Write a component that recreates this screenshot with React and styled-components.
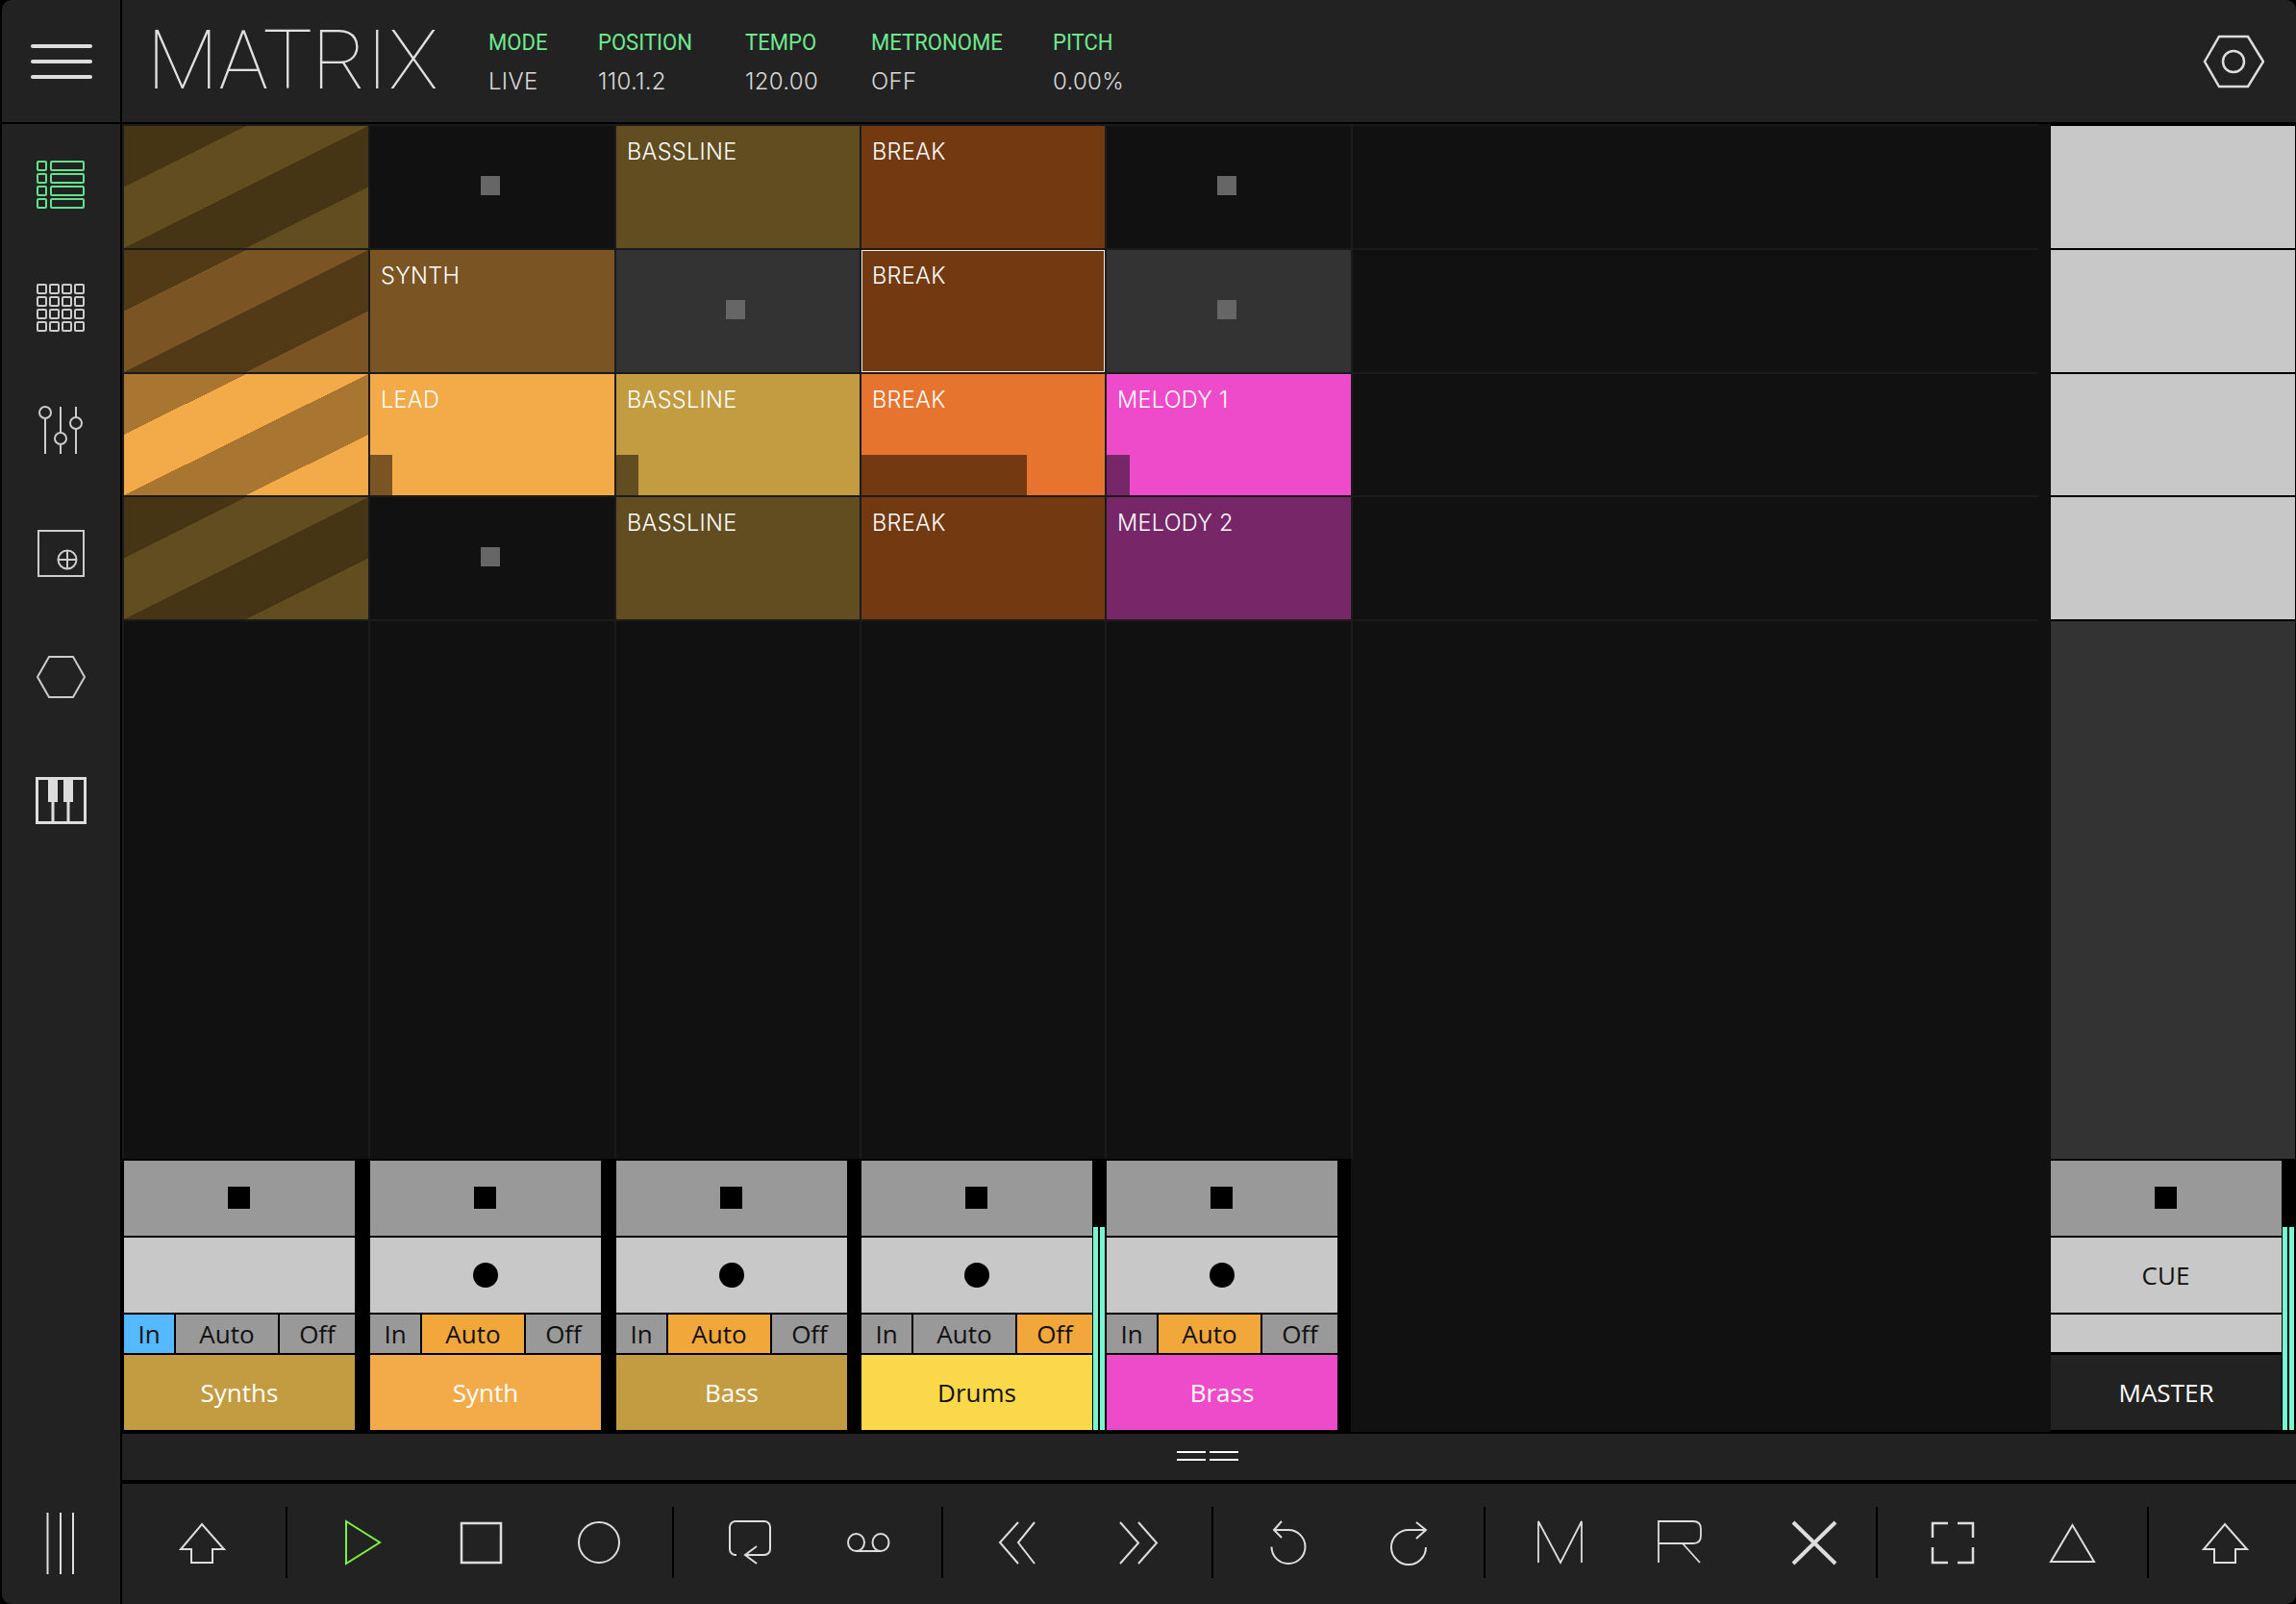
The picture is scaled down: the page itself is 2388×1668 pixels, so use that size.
import React from "react";
import styled, { createGlobalStyle } from "styled-components";

const Global = createGlobalStyle`
  html, body {
    height: 1668px;
    margin: 0;
    padding: 0;
    overflow: hidden;
    background: #000;
  }
  * {
    box-sizing: border-box;
  }
`;

const Window = styled.div`
  display: grid;
  grid-template-columns: 123px 1fr;
  column-gap: 2px;
  width: 2386px;
  height: 1668px;
  margin-left: 2px;
  border-radius: 10px;
  overflow: hidden;
  background: #000;
`;

const Side = styled.aside`
  display: flex;
  flex-direction: column;
  background: #222;
`;
const MenuCell = styled.div`
  display: flex;
  flex-direction: column;
  gap: 12px;
  height: 129px;
  padding: 46px 0 0 30px;
  border-bottom: 2px solid #000;
`;
const MenuBar = styled.span`
  width: 64px;
  height: 4px;
  border-radius: 2px;
  background: #ddd;
`;
const NavButton = styled.div`
  height: 128px;
  padding: 32px 0 0 30px;
`;
const SideFoot = styled.div`
  margin-top: auto;
  padding: 0 0 31px 30px;
`;

const Main = styled.main`
  display: flex;
  flex-direction: column;
  min-width: 0;
`;
const Header = styled.header`
  display: flex;
  height: 127px;
  margin-bottom: 2px;
  padding: 0 33px 0 26px;
  background: #222;
`;
const Logo = styled.div`
  width: 355px;
  padding-top: 13px;
  font-family: "Roboto", sans-serif;
  font-weight: 100;
  font-size: 86px;
  line-height: 100px;
  color: #e0e0e0;
`;
const Readouts = styled.div`
  display: grid;
  grid-template-columns: 114px 153px 131px 189px auto;
  grid-auto-flow: column;
  grid-template-rows: 28px 28px;
  row-gap: 13px;
  padding-top: 30px;
`;
const ReadLabel = styled.div`
  font-family: "Roboto", sans-serif;
  font-size: 24px;
  line-height: 28px;
  color: #6fe88f;
  transform: scaleX(0.92);
  transform-origin: left;
`;
const ReadValue = styled.div`
  font-family: "Inter", sans-serif;
  font-weight: 300;
  font-size: 24px;
  line-height: 28px;
  letter-spacing: 0.3px;
  color: #d8d8d8;
`;
const Settings = styled.div`
  margin-left: auto;
  padding-top: 32px;
`;

const Content = styled.section`
  display: flex;
  height: 1360px;
  margin-bottom: 2px;
  background: #111;
`;
const TrackArea = styled.div`
  display: flex;
  flex-direction: column;
  width: 2006px;
`;
const Matrix = styled.div`
  display: grid;
  grid-template-columns: 254px 254px 253px 253px 254px 713px;
  grid-template-rows: 127px 127px 126px 127px 1fr;
  gap: 2px;
  width: 1993px;
  height: 1076px;
  padding: 2px 0 0 2px;
  background: #1b1b1b;
`;
const Slot = styled.div`
  display: flex;
  align-items: center;
  justify-content: center;
  padding: 0 5px 4px 0;
  background: ${(p) => p.$bg || "#111"};
`;
const StopMark = styled.span`
  width: 20px;
  height: 20px;
  background: #666;
`;
const Scene = styled.div`
  background: linear-gradient(
    to bottom right,
    ${(p) => p.$dark} 25%,
    ${(p) => p.$light} 25% 50%,
    ${(p) => p.$dark} 50% 75%,
    ${(p) => p.$light} 75%
  );
`;
const Clip = styled.div`
  display: flex;
  flex-direction: column;
  background: ${(p) => p.$bg};
  outline: ${(p) => (p.$selected ? "1px solid #eee" : "none")};
  outline-offset: -1px;
`;
const ClipName = styled.div`
  padding: 13px 0 0 11px;
  font-family: "Inter", sans-serif;
  font-weight: 350;
  font-size: 23.5px;
  line-height: 28px;
  letter-spacing: 0.3px;
  color: #fff;
`;
const ClipProgress = styled.div`
  width: ${(p) => p.$w}px;
  height: 42px;
  margin-top: auto;
  background: ${(p) => p.$bg};
`;

const StripRow = styled.div`
  display: flex;
  height: 284px;
`;
const StripEdge = styled.div`
  width: 2px;
  background: #000;
`;
const Strip = styled.div`
  display: flex;
  width: ${(p) => p.$w}px;
  padding: 2px 0;
  background: #000;
`;
const Stack = styled.div`
  display: grid;
  grid-template-rows: 78px 78px 40px 78px;
  row-gap: 2px;
  flex: 0 0 240px;
`;
const StopButton = styled.div`
  display: flex;
  align-items: center;
  justify-content: center;
  padding: 0 1px 1px 0;
  background: #999;
`;
const StopSquare = styled.span`
  width: 23px;
  height: 23px;
  background: #000;
`;
const RecButton = styled.div`
  display: flex;
  align-items: center;
  justify-content: center;
  padding-right: 1px;
  font-family: "Open Sans", sans-serif;
  font-size: 26px;
  color: #111;
  background: #c8c8c8;
`;
const RecDot = styled.span`
  width: 26px;
  height: 26px;
  border-radius: 50%;
  background: #000;
`;
const Monitor = styled.div`
  display: grid;
  grid-template-columns: 52px 106px 78px;
  column-gap: 2px;
`;
const MonitorOption = styled.div`
  display: flex;
  align-items: center;
  justify-content: center;
  font-family: "Open Sans", sans-serif;
  font-size: 26px;
  color: #111;
  background: ${(p) => p.$on || "#999"};
`;
const TrackName = styled.div`
  display: flex;
  align-items: center;
  justify-content: center;
  font-family: "Open Sans", sans-serif;
  font-size: 26px;
  color: ${(p) => p.$ink || "#fff"};
  background: ${(p) => p.$bg};
`;
const Meter = styled.div`
  display: flex;
  gap: 2px;
  padding: 69px 0 0 1px;
`;
const MeterBar = styled.span`
  width: 5px;
  background: #78f7d3;
`;

const MasterCol = styled.div`
  display: flex;
  flex-direction: column;
  width: 255px;
  background: #000;
`;
const MasterClips = styled.div`
  display: grid;
  grid-template-rows: 127px 127px 126px 127px;
  row-gap: 2px;
  padding: 2px 1px 2px 0;
`;
const MasterClip = styled.div`
  background: #c8c8c8;
`;
const MasterFill = styled.div`
  flex: 1;
  margin-right: 1px;
  background: #333;
`;
const MasterBlank = styled.div`
  margin-bottom: 1px;
  background: #c8c8c8;
`;

const Divider = styled.div`
  display: flex;
  justify-content: center;
  height: 48px;
  margin-bottom: 4px;
  padding-top: 18px;
  background: #222;
`;
const Grip = styled.div`
  display: flex;
  gap: 4px;
  margin-left: -4px;
`;
const GripBar = styled.span`
  width: 30px;
  height: 10px;
  border-top: 2px solid #fff;
  border-bottom: 2px solid #fff;
`;

const Toolbar = styled.div`
  display: flex;
  align-items: center;
  flex: 1;
  padding-bottom: 3px;
  background: #222;
`;
const ToolButton = styled.div`
  display: flex;
  margin-left: ${(p) => p.$ml}px;
`;
const ToolRule = styled.span`
  width: 2px;
  height: 74px;
  margin-left: ${(p) => p.$ml}px;
  background: #000;
`;
const Glyph = styled.svg`
  display: block;
  width: 64px;
  height: 64px;
  fill: none;
  stroke: ${(p) => p.$ink || "#ddd"};
  stroke-width: ${(p) => p.$sw || 2};
`;

const NAV = [
  <Glyph viewBox="0 0 64 64" $ink="#62e38b" key="clips">
    {[7, 20, 33, 46].map((y) => (
      <g key={y}>
        <rect x="7" y={y} width="9" height="9" rx="1" />
        <rect x="21" y={y} width="34" height="9" rx="1" />
      </g>
    ))}
  </Glyph>,
  <Glyph viewBox="0 0 64 64" $ink="#ccc" key="pads">
    {[7, 20, 33, 46].map((y) =>
      [7, 20, 33, 46].map((x) => (
        <rect key={`${x}-${y}`} x={x} y={y} width="9" height="9" rx="1" />
      ))
    )}
  </Glyph>,
  <Glyph viewBox="0 0 64 64" $ink="#ccc" key="mixer">
    <path d="M15 18V55M31 6V33M31 45V55M47 6V17M47 29V55" />
    <circle cx="15" cy="12" r="6" />
    <circle cx="31" cy="39" r="6" />
    <circle cx="47" cy="23" r="6" />
  </Glyph>,
  <Glyph viewBox="0 0 64 64" $ink="#ccc" key="device">
    <rect x="8" y="7" width="47" height="47" />
    <circle cx="38" cy="37" r="9.5" />
    <path d="M38 27.5V46.5M28.5 37H47.5" />
  </Glyph>,
  <Glyph viewBox="0 0 64 64" $ink="#ccc" key="hex">
    <path d="M7 31L19 10H44L56 31L44 52H19Z" />
  </Glyph>,
  <Glyph viewBox="0 0 64 64" $ink="#ddd" $sw={3} key="piano">
    <rect x="6.5" y="8.5" width="50" height="46" />
    <path d="M23 33V55M39 33V55" />
    <path d="M18 8H28V33H18ZM34 8H44V33H34Z" fill="#ddd" stroke="none" />
  </Glyph>,
];

const UpArrow = () => <path d="M32 13L55 39H43V53H21V39H10Z" />;

const TOOLS = [
  { ml: 51, icon: <UpArrow /> },
  { ml: 55 },
  { ml: 46, ink: "#7df33e", icon: <path d="M15 10L50 32L15 54Z" /> },
  { ml: 59, sw: 2.5, icon: <rect x="12" y="12" width="41" height="41" /> },
  { ml: 59, icon: <circle cx="32" cy="32" r="21" /> },
  { ml: 44 },
  {
    ml: 47,
    icon: (
      <path d="M18 45H17A6 6 0 0 1 11 39V16A6 6 0 0 1 17 10H47A6 6 0 0 1 53 16V39A6 6 0 0 1 47 45H27M39 36L27 45L39 54" />
    ),
  },
  {
    ml: 59,
    icon: (
      <>
        <ellipse cx="19.5" cy="32" rx="8.5" ry="9" />
        <ellipse cx="45" cy="32" rx="8.5" ry="9" />
        <path d="M19.5 41H45" />
      </>
    ),
  },
  { ml: 44 },
  { ml: 45, icon: <path d="M33 11L14 32L33 54M50 11L33 32L50 54" /> },
  { ml: 62, icon: <path d="M13 11L32 32.5L13 54M32 11L51 32.5L32 54" /> },
  { ml: 44 },
  {
    ml: 46,
    icon: <path d="M25 10L17 19L25 27M17 19H32A17.5 17.5 0 1 1 14.5 36.5" />,
  },
  {
    ml: 61,
    icon: <path d="M40 11L50 19L40 28M50 19H32A18 18 0 1 0 50 37" />,
  },
  { ml: 46 },
  { ml: 45, sw: 1.8, icon: <path d="M10 53V10L33 53L55 10V53" /> },
  {
    ml: 61,
    sw: 1.8,
    icon: <path d="M10 53V10H46Q54 10 54 18V25Q54 33 46 33H10M35 33L53 53" />,
  },
  { ml: 76, sw: 4, icon: <path d="M10 11L54 54M54 11L10 54" /> },
  { ml: 32 },
  {
    ml: 46,
    sw: 2.5,
    icon: <path d="M11 27V12H27M37 12H53V27M11 37V53H27M37 53H53V37" />,
  },
  { ml: 60, icon: <path d="M32.5 14L55 52H10Z" /> },
  { ml: 46 },
  { ml: 47, icon: <UpArrow /> },
];

const READOUTS = [
  ["MODE", "LIVE"],
  ["POSITION", "110.1.2"],
  ["TEMPO", "120.00"],
  ["METRONOME", "OFF"],
  ["PITCH", "0.00%"],
];

const GOLD = "#c39b41";
const GOLD_DIM = "#614d1f";
const ORANGE = "#f3aa48";
const ORANGE_DIM = "#7a5523";
const BREAK = "#e6742e";
const BREAK_DIM = "#733a12";
const PINK = "#ee4bcb";
const PINK_DIM = "#772667";

const ROWS = [
  [
    { scene: ["#453515", GOLD_DIM] },
    { empty: "#111" },
    { name: "BASSLINE", bg: GOLD_DIM },
    { name: "BREAK", bg: BREAK_DIM },
    { empty: "#111" },
  ],
  [
    { scene: ["#523a17", ORANGE_DIM] },
    { name: "SYNTH", bg: ORANGE_DIM },
    { empty: "#333" },
    { name: "BREAK", bg: BREAK_DIM, selected: true },
    { empty: "#333" },
  ],
  [
    { scene: ["#a97632", ORANGE] },
    { name: "LEAD", bg: ORANGE, bar: ORANGE_DIM, w: 23 },
    { name: "BASSLINE", bg: GOLD, bar: GOLD_DIM, w: 23 },
    { name: "BREAK", bg: BREAK, bar: BREAK_DIM, w: 172 },
    { name: "MELODY 1", bg: PINK, bar: PINK_DIM, w: 24 },
  ],
  [
    { scene: ["#453515", GOLD_DIM] },
    { empty: "#111" },
    { name: "BASSLINE", bg: GOLD_DIM },
    { name: "BREAK", bg: BREAK_DIM },
    { name: "MELODY 2", bg: PINK_DIM },
  ],
];

const TRACKS = [
  { name: "Synths", bg: GOLD, w: 256, mode: "In", rec: false },
  { name: "Synth", bg: ORANGE, w: 256, mode: "Auto", rec: true },
  { name: "Bass", bg: GOLD, w: 255, mode: "Auto", rec: true },
  { name: "Drums", bg: "#fbd84a", ink: "#111", w: 255, mode: "Off", rec: true, meter: true },
  { name: "Brass", bg: PINK, w: 254, mode: "Auto", rec: true },
];

const modeColor = (opt, mode) => {
  if (opt !== mode) return undefined;
  return opt === "In" ? "#55b9ff" : "#f2a73b";
};

const renderCell = (cell, key) => {
  if (cell.scene) return <Scene key={key} $dark={cell.scene[0]} $light={cell.scene[1]} />;
  if (cell.empty)
    return (
      <Slot key={key} $bg={cell.empty}>
        <StopMark />
      </Slot>
    );
  return (
    <Clip key={key} $bg={cell.bg} $selected={cell.selected}>
      <ClipName>{cell.name}</ClipName>
      {cell.bar && <ClipProgress $w={cell.w} $bg={cell.bar} />}
    </Clip>
  );
};

export default function App() {
  return (
    <>
      <Global />
      <Window>
        <Side>
          <MenuCell>
            <MenuBar />
            <MenuBar />
            <MenuBar />
          </MenuCell>
          {NAV.map((icon) => (
            <NavButton key={icon.key}>{icon}</NavButton>
          ))}
          <SideFoot>
            <Glyph viewBox="0 0 64 64" $sw={2}>
              <path d="M17.5 0V64M31 0V64M44 0V64" />
            </Glyph>
          </SideFoot>
        </Side>
        <Main>
          <Header>
            <Logo>MATRIX</Logo>
            <Readouts>
              {READOUTS.map(([label, value]) => (
                <React.Fragment key={label}>
                  <ReadLabel>{label}</ReadLabel>
                  <ReadValue>{value}</ReadValue>
                </React.Fragment>
              ))}
            </Readouts>
            <Settings>
              <Glyph viewBox="0 0 64 64" $sw={2.5}>
                <path d="M2 32L17 6H47L63 32L47 58H17Z" />
                <circle cx="32" cy="32" r="11" />
              </Glyph>
            </Settings>
          </Header>
          <Content>
            <TrackArea>
              <Matrix>
                {ROWS.map((row, r) => (
                  <React.Fragment key={r}>
                    {row.map((cell, c) => renderCell(cell, c))}
                    <Slot />
                  </React.Fragment>
                ))}
                {[0, 1, 2, 3, 4, 5].map((c) => (
                  <Slot key={c} />
                ))}
              </Matrix>
              <StripRow>
                <StripEdge />
                {TRACKS.map((t) => (
                  <Strip key={t.name} $w={t.w}>
                    <Stack>
                      <StopButton>
                        <StopSquare />
                      </StopButton>
                      <RecButton>{t.rec && <RecDot />}</RecButton>
                      <Monitor>
                        {["In", "Auto", "Off"].map((opt) => (
                          <MonitorOption key={opt} $on={modeColor(opt, t.mode)}>
                            {opt}
                          </MonitorOption>
                        ))}
                      </Monitor>
                      <TrackName $bg={t.bg} $ink={t.ink}>
                        {t.name}
                      </TrackName>
                    </Stack>
                    {t.meter && (
                      <Meter>
                        <MeterBar />
                        <MeterBar />
                      </Meter>
                    )}
                  </Strip>
                ))}
              </StripRow>
            </TrackArea>
            <MasterCol>
              <MasterClips>
                <MasterClip />
                <MasterClip />
                <MasterClip />
                <MasterClip />
              </MasterClips>
              <MasterFill />
              <Strip $w={255}>
                <Stack>
                  <StopButton>
                    <StopSquare />
                  </StopButton>
                  <RecButton>CUE</RecButton>
                  <MasterBlank />
                  <TrackName $bg="#222">MASTER</TrackName>
                </Stack>
                <Meter>
                  <MeterBar />
                  <MeterBar />
                </Meter>
              </Strip>
            </MasterCol>
          </Content>
          <Divider>
            <Grip>
              <GripBar />
              <GripBar />
            </Grip>
          </Divider>
          <Toolbar>
            {TOOLS.map((t, i) =>
              t.icon ? (
                <ToolButton key={i} $ml={t.ml}>
                  <Glyph viewBox="0 0 64 64" $ink={t.ink} $sw={t.sw}>
                    {t.icon}
                  </Glyph>
                </ToolButton>
              ) : (
                <ToolRule key={i} $ml={t.ml} />
              )
            )}
          </Toolbar>
        </Main>
      </Window>
    </>
  );
}
